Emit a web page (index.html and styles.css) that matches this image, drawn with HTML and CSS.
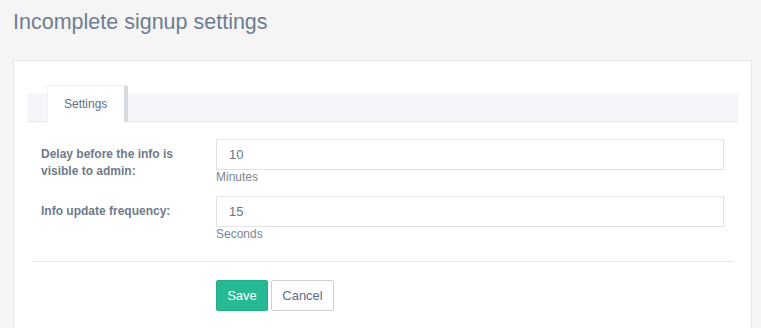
FILE: index.html
```html
<!DOCTYPE html>
<html>
<head>
<meta charset="utf-8">
<link rel="stylesheet" href="styles.css">
</head>
<body>
<h1 class="page-title">Incomplete signup settings</h1>
<div class="panel">
  <div class="tabbar">
    <div class="tab">Settings</div>
  </div>
  <form class="form">
    <div class="row">
      <label class="label">Delay before the info is visible to admin:</label>
      <div class="field">
        <input class="input" type="text" value="10">
        <div class="help">Minutes</div>
      </div>
    </div>
    <div class="row">
      <label class="label">Info update frequency:</label>
      <div class="field">
        <input class="input" type="text" value="15">
        <div class="help">Seconds</div>
      </div>
    </div>
    <div class="sep"></div>
    <div class="actions">
      <button type="button" class="btn btn-save">Save</button>
      <button type="button" class="btn btn-cancel">Cancel</button>
    </div>
  </form>
</div>
</body>
</html>
```
FILE: styles.css
```css
html, body {
  margin: 0;
  padding: 0;
  background: #f5f5f5;
  font-family: "Liberation Sans", Arial, sans-serif;
  overflow: hidden;
}
.page-title {
  margin: 0;
  padding: 10px 13px 0;
  font-size: 21.5px;
  line-height: 24px;
  font-weight: normal;
  color: #6e7d92;
}
.panel {
  margin: 26px 9px 0 13px;
  background: #fff;
  border: 1px solid #e4e6ea;
  border-bottom: 0;
  padding: 32px 13px 17px;
}
.tabbar {
  height: 28px;
  background: #f5f6f9;
  border-bottom: 1px solid #e5e7eb;
  display: flex;
  padding-left: 20px;
}
.tab {
  margin-top: -8px;
  height: 37px;
  box-sizing: border-box;
  background: #fff;
  border-top: 1px solid #eef0f3;
  border-left: 1px solid #f0f1f4;
  border-right: 4px solid #d7dadf;
  border-radius: 2px 3px 0 0;
  padding: 11px 17px 0 16px;
  font-size: 12px;
  line-height: 14px;
  color: #5f6f8c;
}
.form {
  padding: 17px 14px 0 14px;
}
.row {
  display: flex;
  margin-bottom: 11px;
}
.label {
  width: 175px;
  flex: none;
  box-sizing: border-box;
  padding: 7px 20px 0 0;
  font-size: 12px;
  line-height: 17px;
  font-weight: bold;
  color: #6f7a8c;
}
.field {
  flex: 1;
}
.input {
  display: block;
  width: 100%;
  box-sizing: border-box;
  height: 31px;
  margin: 0;
  border: 1px solid #e0e2e6;
  border-top-color: #e6e7ea;
  padding: 0 12px;
  font-family: "Liberation Sans", Arial, sans-serif;
  font-size: 13px;
  color: #66748c;
  background: #fff;
  outline: none;
}
.help {
  font-size: 12px;
  line-height: 15px;
  color: #7a8494;
}
.sep {
  height: 1px;
  background: #e6e6e6;
  margin: 19px -9px 18px -9px;
}
.actions {
  display: flex;
  gap: 3px;
  padding-left: 175px;
}
.btn {
  height: 31px;
  box-sizing: border-box;
  border-radius: 2px;
  font-family: "Liberation Sans", Arial, sans-serif;
  font-size: 13px;
  padding: 0;
  margin: 0;
}
.btn-save {
  width: 52px;
  background: #26b994;
  border: 1px solid #22ad8a;
  color: #fff;
}
.btn-cancel {
  width: 63px;
  background: #fff;
  border: 1px solid #cfcfcf;
  color: #5d6d8c;
}
```
